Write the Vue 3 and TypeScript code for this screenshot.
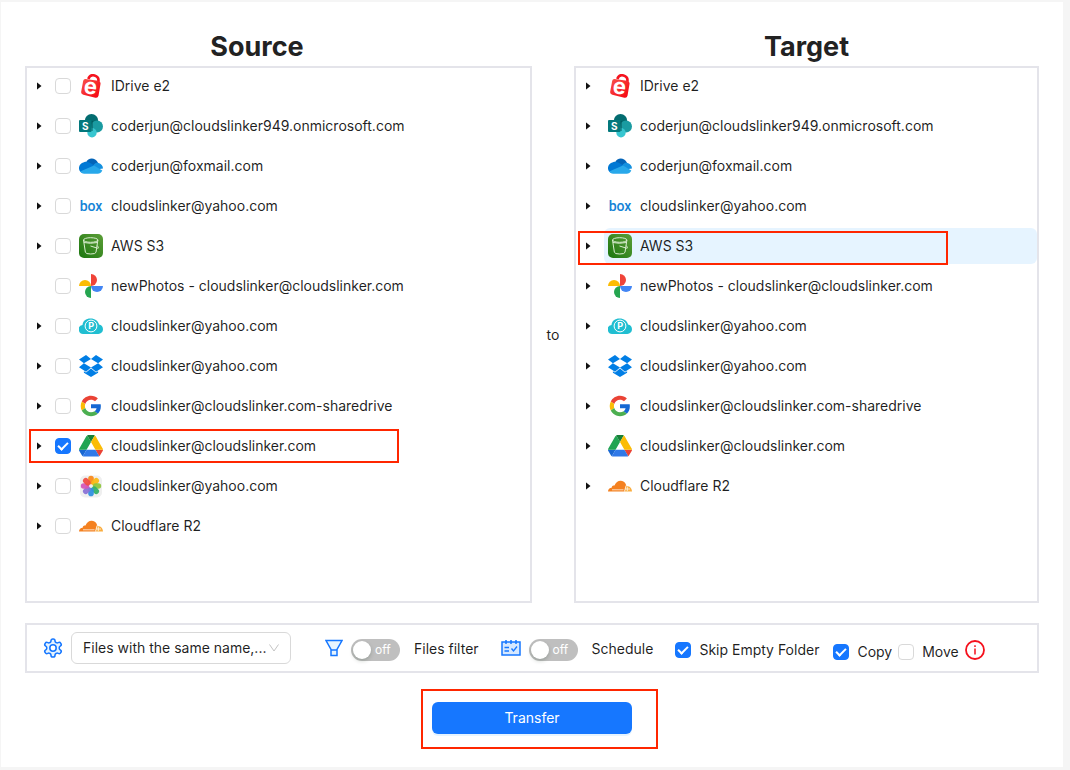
<script setup lang="ts">
import { ref } from 'vue'

interface Drive {
  id: string
  icon: string
  name: string
  leaf?: boolean
}

const shared: Drive[] = [
  { id: 'idrive', icon: 'idrive', name: 'IDrive e2' },
  { id: 'sharepoint', icon: 'sharepoint', name: 'coderjun@cloudslinker949.onmicrosoft.com' },
  { id: 'onedrive', icon: 'onedrive', name: 'coderjun@foxmail.com' },
  { id: 'box', icon: 'box', name: 'cloudslinker@yahoo.com' },
  { id: 's3', icon: 's3', name: 'AWS S3' },
  { id: 'photos', icon: 'photos', name: 'newPhotos - cloudslinker@cloudslinker.com' },
  { id: 'pcloud', icon: 'pcloud', name: 'cloudslinker@yahoo.com' },
  { id: 'dropbox', icon: 'dropbox', name: 'cloudslinker@yahoo.com' },
  { id: 'google', icon: 'google', name: 'cloudslinker@cloudslinker.com-sharedrive' },
  { id: 'gdrive', icon: 'gdrive', name: 'cloudslinker@cloudslinker.com' },
]
const cloudflare: Drive = { id: 'r2', icon: 'cloudflare', name: 'Cloudflare R2' }

const sources: Drive[] = [
  ...shared.map((d) => ({ ...d, leaf: d.id === 'photos' })),
  { id: 'icloud', icon: 'icloud', name: 'cloudslinker@yahoo.com' },
  cloudflare,
]
const targets: Drive[] = [...shared, cloudflare]

const checked = ref<string[]>(['gdrive'])
const target = ref('s3')
const filterOn = ref(false)
const scheduleOn = ref(false)
const skipEmpty = ref(true)
const copy = ref(true)
const move = ref(false)
const petals = [
  { angle: 0, color: '#f98a1b' },
  { angle: 45, color: '#fbb916' },
  { angle: 90, color: '#8fc63d' },
  { angle: 135, color: '#35b06b' },
  { angle: 180, color: '#2f8fe0' },
  { angle: 225, color: '#8a72d6' },
  { angle: 270, color: '#d457b8' },
  { angle: 315, color: '#f04e45' },
]
</script>

<template>
  <svg class="defs" aria-hidden="true">
    <defs>
      <linearGradient id="gRed" x1="0" x2="1" y1="0" y2="1">
        <stop offset="0" stop-color="#f8544c" />
        <stop offset="1" stop-color="#f6000e" />
      </linearGradient>
      <linearGradient id="gGreen" x1="0" x2="1" y1="1" y2="0">
        <stop offset="0" stop-color="#1b760f" />
        <stop offset="1" stop-color="#5c9e38" />
      </linearGradient>
      <symbol id="idrive" viewBox="0 0 24 24">
        <path d="M9.300 5C10.500 1.500 13 .800 15.500 1.500C18.600 2.500 20 4.500 19.300 7.500" fill="none" stroke="#f5141f" stroke-width="2.600" />
        <path d="M6.500 5 19 6.800Q22 7.300 21.500 10L19.500 21.700Q18.900 24.300 16.300 23.700L4.300 20.700Q1.700 20 2.200 17.500L4.200 6.800Q4.700 4.800 6.500 5Z" fill="url(#gRed)" />
        <text x="11.500" y="20" text-anchor="middle" font-family="Inter, sans-serif" font-weight="700" font-size="22" fill="#fff" transform="rotate(6 12 14)">e</text>
      </symbol>
      <symbol id="sharepoint" viewBox="0 0 24 24">
        <circle cx="12.500" cy="6.700" r="6.700" fill="#036c70" />
        <circle cx="18" cy="12.500" r="6" fill="#1a9ba1" />
        <circle cx="13" cy="18.800" r="4.700" fill="#37c6d0" />
        <path d="M11 7h3v10h-3z" fill="#024c50" opacity=".45" />
        <rect x="0" y="6" width="12.500" height="12" rx="1" fill="#03787c" />
        <text x="6.200" y="15.500" text-anchor="middle" font-family="Inter, sans-serif" font-weight="700" font-size="10" fill="#fff">S</text>
      </symbol>
      <symbol id="onedrive" viewBox="0 0 24 24">
        <path d="M7 8.500C9 4 15.500 2.500 19 8.800L13 14Z" fill="#0364b8" />
        <path d="M5 8.200C8 7 10.500 8.400 15.500 11.500L4 19.300C-2 18-1 9 5 8.200Z" fill="#0078d4" />
        <path d="M14.500 11C16 8.500 18.500 8.500 19.500 8.900C22 9.500 24 11.500 24 14.400L14 16Z" fill="#1490df" />
        <path d="M15 11.400 23.300 16.500C22.300 19 20.500 19.700 18.800 19.700H5.200C3.500 19.700 2 18.800 1.100 17.600Z" fill="#28a8ea" />
      </symbol>
      <symbol id="box" viewBox="0 0 24 24">
        <text x="12" y="17" text-anchor="middle" font-family="Roboto, sans-serif" font-weight="500" font-size="14" fill="#1483d6">box</text>
      </symbol>
      <symbol id="s3" viewBox="0 0 24 24">
        <rect width="24" height="24" rx="5" fill="url(#gGreen)" />
        <g fill="none" stroke="#d9edcf" stroke-width="1">
          <ellipse cx="11.700" cy="6" rx="7.200" ry="2.300" />
          <path d="M4.500 6 6.400 18.300Q6.700 20 11.700 20T17 18.300L18.900 6M4.900 8.500Q11 10 18.500 8.500M11.500 12 18.500 14.200Q20.500 14.600 18.200 11.500" />
        </g>
      </symbol>
      <symbol id="photos" viewBox="0 0 24 24">
        <path d="M12 0A6 6 0 0 1 12 12Z" fill="#f04438" />
        <path d="M24 12A6 6 0 0 1 12 12Z" fill="#4285f4" />
        <path d="M12 24A6 6 0 0 1 12 12Z" fill="#25a550" />
        <path d="M0 12A6 6 0 0 1 12 12Z" fill="#fbbc04" />
      </symbol>
      <symbol id="pcloud" viewBox="0 0 24 24">
        <path d="M4.800 20A4.600 4.600 0 0 1 3.500 10.900C4 6.800 6.900 4.500 11.500 4.500C16 4.500 19.400 7 20 10.600C22.500 10.800 24 12.800 24 15.300C24 18 22 20 19.300 20Z" fill="#20bed1" />
        <circle cx="12" cy="12" r="5.900" fill="none" stroke="#fff" stroke-width="1" />
        <text x="12.200" y="15.400" text-anchor="middle" font-family="Inter, sans-serif" font-weight="700" font-size="9" fill="#fff">P</text>
      </symbol>
      <symbol id="dropbox" viewBox="0 0 24 24">
        <path d="M7 1 0 5.500 4.900 9.300 12 5ZM17 1 24 5.500 19.100 9.300 12 5ZM0 13.200 7 17.700 12 13.600 4.900 9.300ZM24 13.200 17 17.700 12 13.600 19.100 9.300ZM12 14.500 7 18.600 4.900 17.200V18.800L12 23 19.100 18.800V17.200L17 18.600Z" fill="#007ee5" />
      </symbol>
      <symbol id="google" viewBox="-4 -4 56 56">
        <path fill="#ea4335" d="M24 9.500c3.540 0 6.710 1.220 9.210 3.600l6.850-6.850C35.900 2.380 30.470 0 24 0 14.620 0 6.510 5.380 2.560 13.220l7.980 6.190C12.430 13.720 17.740 9.500 24 9.500z" />
        <path fill="#1568d3" d="M46.980 24.550c0-1.570-.15-3.090-.38-4.550H24v9.020h12.940c-.58 2.960-2.260 5.480-4.780 7.180l7.730 6c4.510-4.180 7.090-10.360 7.090-17.650z" />
        <path fill="#fbbc05" d="M10.530 28.590c-.48-1.450-.76-2.990-.76-4.590s.27-3.140.76-4.590l-7.980-6.190C.92 16.460 0 20.120 0 24c0 3.880.92 7.540 2.560 10.780l7.970-6.190z" />
        <path fill="#4caf50" d="M24 48c6.480 0 11.930-2.130 15.890-5.810l-7.730-6c-2.150 1.450-4.920 2.300-8.160 2.300-6.260 0-11.570-4.220-13.470-9.910l-7.980 6.190C6.510 42.620 14.620 48 24 48z" />
      </symbol>
      <symbol id="gdrive" viewBox="0 -4 87.300 87.300">
        <path d="m6.600 66.850 3.850 6.650c.8 1.400 1.950 2.500 3.300 3.300l13.750-23.800h-27.500c0 1.550.4 3.100 1.200 4.500z" fill="#1967d2" />
        <path d="m43.650 25-13.750-23.800c-1.350.8-2.500 1.900-3.300 3.300l-25.400 44a9.060 9.060 0 0 0-1.200 4.500h27.500z" fill="#21a453" />
        <path d="m73.550 76.800c1.350-.8 2.500-1.900 3.300-3.300l1.600-2.750 7.650-13.250c.8-1.400 1.200-2.950 1.200-4.500h-27.500l5.850 11.500z" fill="#ea4335" />
        <path d="m43.650 25 13.750-23.800c-1.350-.8-2.900-1.200-4.500-1.200h-18.500c-1.600 0-3.150.45-4.500 1.200z" fill="#188038" />
        <path d="m59.800 53h-32.300l-13.750 23.800c1.350.8 2.900 1.200 4.500 1.200h50.800c1.600 0 3.150-.45 4.500-1.200z" fill="#3079e8" />
        <path d="m73.400 26.500-12.700-22c-.8-1.400-1.950-2.500-3.300-3.300l-13.750 23.800 16.150 28h27.450c0-1.550-.4-3.100-1.200-4.500z" fill="#fbbc04" />
      </symbol>
      <symbol id="icloud" viewBox="0 0 24 24">
        <rect x="1" y="1.500" width="22" height="22" rx="5" fill="#efefef" />
        <rect
          v-for="p in petals"
          :key="p.angle"
          x="9.200"
          y="1.800"
          width="5.600"
          height="8.400"
          rx="2.800"
          :fill="p.color"
          opacity=".95"
          :transform="`rotate(${p.angle} 12 12)`"
        />
      </symbol>
      <symbol id="cloudflare" viewBox="0 0 24 24">
        <path d="M0 17.500C0 15.200 1.700 13.700 3.700 13.700C3.600 12 5 10.900 6.500 11.600C7.800 8 10.300 6.500 13 6.700C15.900 6.900 17.700 8.800 18.300 11.700L16.500 17.500Z" fill="#f48120" />
        <path d="M16.300 17.500 17.800 12.100C21.300 11.700 23.800 14 24 17.500Z" fill="#faad3f" />
        <path d="M4 15.800H15.500M18 11.500 16.500 17.500M19.300 12.500V17M17 15H22" stroke="#fff" stroke-width=".7" fill="none" />
      </symbol>
    </defs>
  </svg>

  <main class="page">
    <div class="columns">
      <section class="source">
        <h2 class="source-title">Source</h2>
        <ul class="panel">
          <li v-for="d in sources" :key="d.id" class="node">
            <span class="switcher">
              <button v-if="!d.leaf" class="expand" type="button" :aria-label="`Expand ${d.name}`"></button>
            </span>
            <input :id="`src-${d.id}`" v-model="checked" class="check" type="checkbox" :value="d.id" />
            <label class="content" :for="`src-${d.id}`">
              <svg class="logo" aria-hidden="true"><use :href="`#${d.icon}`" /></svg>
              <span>{{ d.name }}</span>
            </label>
            <span v-if="d.id === 'gdrive'" class="mark mark-source"></span>
          </li>
        </ul>
      </section>
      <span class="to">to</span>
      <section class="target">
        <h2>Target</h2>
        <ul class="panel">
          <li v-for="d in targets" :key="d.id" class="node">
            <span class="switcher">
              <button class="expand" type="button" :aria-label="`Expand ${d.name}`"></button>
            </span>
            <button class="content pick" :class="{ selected: target === d.id }" type="button" @click="target = d.id">
              <svg class="logo" aria-hidden="true"><use :href="`#${d.icon}`" /></svg>
              <span>{{ d.name }}</span>
            </button>
            <span v-if="d.id === 's3'" class="mark mark-target"></span>
          </li>
        </ul>
      </section>
    </div>

    <div class="toolbar">
      <svg class="gear" viewBox="1 1 22 22" aria-hidden="true">
        <path d="M12.220 2h-.44a2 2 0 0 0-2 2v.18a2 2 0 0 1-1 1.730l-.43.25a2 2 0 0 1-2 0l-.15-.08a2 2 0 0 0-2.730.73l-.22.38a2 2 0 0 0 .73 2.730l.15.1a2 2 0 0 1 1 1.720v.51a2 2 0 0 1-1 1.740l-.15.09a2 2 0 0 0-.73 2.730l.22.38a2 2 0 0 0 2.730.73l.15-.08a2 2 0 0 1 2 0l.43.25a2 2 0 0 1 1 1.730V20a2 2 0 0 0 2 2h.44a2 2 0 0 0 2-2v-.18a2 2 0 0 1 1-1.730l.43-.25a2 2 0 0 1 2 0l.15.08a2 2 0 0 0 2.730-.73l.22-.39a2 2 0 0 0-.73-2.730l-.15-.08a2 2 0 0 1-1-1.740v-.5a2 2 0 0 1 1-1.740l.15-.09a2 2 0 0 0 .73-2.730l-.22-.38a2 2 0 0 0-2.730-.73l-.15.08a2 2 0 0 1-2 0l-.43-.25a2 2 0 0 1-1-1.730V4a2 2 0 0 0-2-2z" fill="#e6f4ff" stroke="#1677ff" stroke-width="1.700" />
        <circle cx="12" cy="12" r="3.500" fill="#fff" stroke="#1677ff" stroke-width="1.700" />
      </svg>
      <div class="select">
        <select aria-label="Files with the same name">
          <option>Files with the same name,...</option>
        </select>
        <svg class="chevron" viewBox="0 0 12 12" aria-hidden="true">
          <path d="M1.500 2.500 6 9 10.500 2.500" fill="none" stroke="#c4c4c4" />
        </svg>
      </div>

      <div class="group filter">
        <svg class="funnel" viewBox="0 0 18 18" aria-hidden="true">
          <path d="M1 1.500H17L12 10.500V16.500H6V10.500Z" fill="#e6f4ff" stroke="#1677ff" stroke-width="1.500" />
          <path d="M6 11H12" stroke="#1677ff" stroke-width="1.500" />
        </svg>
        <label class="switch">
          <input v-model="filterOn" type="checkbox" role="switch" aria-label="Files filter" />
          <span>{{ filterOn ? 'on' : 'off' }}</span>
        </label>
        <span class="caption">Files filter</span>
      </div>

      <div class="group schedule">
        <svg class="calendar" viewBox="0 0 20 18" aria-hidden="true">
          <rect x="1" y="3" width="18" height="13" fill="#d6e8ff" stroke="#1677ff" stroke-width="1.500" />
          <path d="M5 1V5M10 1V5M15 1V5" stroke="#1677ff" stroke-width="1.500" />
          <path d="M3.500 8.500H8M3.500 12H8M10.500 9.500 12.500 12 16 7.500" fill="none" stroke="#1677ff" stroke-width="1.300" />
        </svg>
        <label class="switch">
          <input v-model="scheduleOn" type="checkbox" role="switch" aria-label="Schedule" />
          <span>{{ scheduleOn ? 'on' : 'off' }}</span>
        </label>
        <span class="caption">Schedule</span>
      </div>

      <label class="option skip">
        <input v-model="skipEmpty" class="check" type="checkbox" />
        <span>Skip Empty Folder</span>
      </label>
      <div class="modes">
        <label class="option">
          <input v-model="copy" class="check" type="checkbox" />
          <span>Copy</span>
        </label>
        <label class="option">
          <input v-model="move" class="check" type="checkbox" />
          <span>Move</span>
        </label>
      </div>
      <svg class="info" viewBox="0 0 20 20" aria-hidden="true">
        <circle cx="10" cy="10" r="9" fill="#fff" stroke="#f5101c" stroke-width="1.800" />
        <path d="M10 8.500V14.500M10 5.300V7" stroke="#f5101c" stroke-width="1.500" />
      </svg>
    </div>

    <div class="submit">
      <button class="transfer" type="button">Transfer</button>
      <span class="submit-mark"></span>
    </div>
  </main>
</template>

<style>
body {
  background: #f5f5f5;
}
</style>

<style scoped>
.defs {
  position: absolute;
  width: 0;
  height: 0;
}
.page {
  margin: 2px 7px 3px 1px;
  padding: 26px 24px 33px;
  background: #fff;
  color: rgba(0, 0, 0, 0.88);
  font: 14px/22px Inter, "Liberation Sans", sans-serif;
}
button,
select {
  font: inherit;
  color: inherit;
}
.columns {
  display: flex;
  align-items: stretch;
}
.source {
  flex: 507 1 0;
}
.target {
  flex: 465 1 0;
}
h2 {
  margin: 0;
  text-align: center;
  font-size: 27px;
  line-height: 38px;
  font-weight: 700;
  color: #222;
}
.source-title {
  padding-right: 43px;
}
.to {
  flex: 0 0 42px;
  margin-top: 38px;
  align-self: center;
  text-align: center;
}
.panel {
  box-sizing: border-box;
  min-height: 537px;
  margin: 0;
  padding: 0;
  list-style: none;
  border: 2px solid #e4e4ea;
}
.node {
  position: relative;
  display: flex;
  align-items: center;
  height: 36px;
  margin-bottom: 4px;
}
.switcher {
  display: flex;
  flex: 0 0 24px;
  justify-content: center;
  margin-right: 4px;
}
.expand {
  width: 5px;
  height: 8px;
  padding: 0;
  border: 0;
  background: #111;
  clip-path: polygon(0 0, 100% 50%, 0 100%);
}
.check {
  appearance: none;
  box-sizing: border-box;
  flex: none;
  width: 16px;
  height: 16px;
  margin: 0;
  border: 1px solid #d9d9d9;
  border-radius: 4px;
  background: #fff;
}
.check:checked {
  display: grid;
  place-items: center;
  border-color: #1677ff;
  background: #1677ff;
}
.check:checked::after {
  content: "";
  box-sizing: border-box;
  width: 6px;
  height: 10px;
  margin-bottom: 2px;
  border: solid #fff;
  border-width: 0 2px 2px 0;
  transform: rotate(45deg);
}
.content {
  display: flex;
  flex: 1;
  align-items: center;
  gap: 8px;
  height: 36px;
  padding: 0 4px;
  border-radius: 6px;
  white-space: nowrap;
}
.node .check + .content {
  margin-left: 4px;
}
.pick {
  border: 0;
  background: none;
  text-align: left;
}
.selected {
  background: #e6f4ff;
}
.logo {
  flex: none;
  width: 24px;
  height: 24px;
}
.mark {
  position: absolute;
  box-sizing: border-box;
  left: 2px;
  width: 370px;
  height: 34px;
  border: 2px solid #ff2600;
  pointer-events: none;
}
.mark-source {
  top: 1px;
}
.mark-target {
  top: 3px;
}
.toolbar {
  display: flex;
  align-items: center;
  box-sizing: border-box;
  height: 50px;
  margin-top: 20px;
  padding: 0 16px;
  border: 2px solid #e4e4ea;
  white-space: nowrap;
}
.toolbar svg {
  flex: none;
}
.gear,
.info {
  width: 20px;
  height: 20px;
}
.select {
  position: relative;
  width: 220px;
  margin-left: 8px;
}
.select select {
  appearance: none;
  display: block;
  box-sizing: border-box;
  width: 100%;
  height: 32px;
  padding: 0 11px;
  border: 1px solid #d9d9d9;
  border-radius: 6px;
  background: #fff;
}
.chevron {
  position: absolute;
  top: 10px;
  right: 11px;
  width: 12px;
  height: 12px;
}
.group {
  display: flex;
  align-items: center;
}
.filter {
  margin-left: 34px;
}
.schedule {
  margin-left: 22px;
}
.funnel {
  width: 18px;
  height: 18px;
}
.calendar {
  width: 20px;
  height: 18px;
}
.switch {
  position: relative;
  box-sizing: border-box;
  width: 49px;
  height: 22px;
  margin: 4px 14px 0 8px;
  border-radius: 11px;
  background: #bfbfbf;
  color: #fff;
  font-size: 12px;
  line-height: 22px;
}
.switch input {
  appearance: none;
  position: absolute;
  top: 2px;
  left: 2px;
  width: 18px;
  height: 18px;
  margin: 0;
  border-radius: 9px;
  background: #fff;
  box-shadow: 0 2px 4px rgba(0, 35, 11, 0.2);
}
.switch span {
  padding-left: 24px;
}
.caption {
  padding-top: 2px;
}
.option {
  display: flex;
  align-items: center;
  gap: 8px;
}
.skip {
  margin: 4px 0 0 22px;
}
.modes {
  display: flex;
  gap: 6px;
  margin: 8px 6px 0 14px;
}
.modes .option {
  gap: 8px;
}
.info {
  margin-top: 4px;
}
.submit {
  position: relative;
  width: 200px;
  margin: 29px auto 0;
}
.submit-mark {
  position: absolute;
  inset: -13px -26px -15px -11px;
  border: 2px solid #ff2600;
  pointer-events: none;
}
.transfer {
  display: block;
  width: 100%;
  height: 32px;
  padding: 0;
  border: 0;
  border-radius: 6px;
  background: #1677ff;
  color: #fff;
  box-shadow: 0 2px 0 rgba(5, 145, 255, 0.1);
}
</style>
